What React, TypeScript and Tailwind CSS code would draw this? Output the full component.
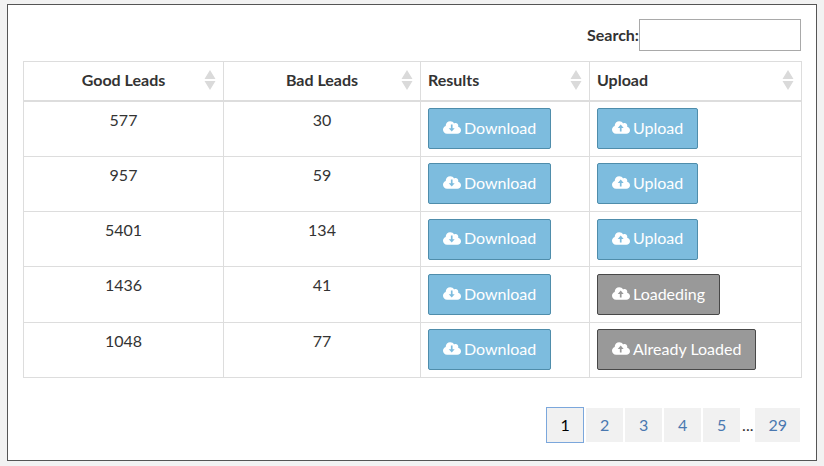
import React from 'react';

const CLOUD =
  'M537.6 226.6c4.1-10.7 6.4-22.4 6.4-34.6 0-53-43-96-96-96-19.7 0-38.1 6-53.3 16.2C367 64.2 315.3 32 256 32c-88.4 0-160 71.6-160 160 0 2.7.1 5.4.2 8.1C40.2 219.8 0 273.2 0 336c0 79.5 64.500 144 144 144h368c70.700 0 128-57.300 128-128 0-61.900-44-113.600-102.400-125.400z';
const UP_ARROW = 'M310 150 205 270h75v130h60V270h75z';
const DOWN_ARROW = 'M310 400 205 280h75V150h60v130h75z';

type Tone = 'blue' | 'gray';
type Direction = 'up' | 'down';

function CloudIcon({ direction, tone }: { direction: Direction; tone: Tone }) {
  return (
    <svg viewBox="0 32 640 448" className="h-[13px] w-[18px] shrink-0" aria-hidden="true">
      <path d={CLOUD} fill="currentColor" />
      <path
        d={direction === 'up' ? UP_ARROW : DOWN_ARROW}
        className={tone === 'blue' ? 'fill-[#7dbcde]' : 'fill-[#999999]'}
      />
    </svg>
  );
}

function SortIcon() {
  return (
    <svg viewBox="0 0 12 20" className="h-5 w-3 shrink-0" fill="#dadada" aria-hidden="true">
      <path d="M6 0 11.500 9H.5zM6 20 .5 11h11z" />
    </svg>
  );
}

function ActionButton({ label, direction, tone }: { label: string; direction: Direction; tone: Tone }) {
  const colors = tone === 'blue' ? 'border-[#4f8dab] bg-[#7dbcde]' : 'border-[#484848] bg-[#999999]';
  return (
    <button
      type="button"
      className={`flex h-[41px] items-center gap-[3px] rounded-xs border px-3.5 pb-0.5 whitespace-nowrap text-white ${colors}`}
    >
      <CloudIcon direction={direction} tone={tone} />
      {label}
    </button>
  );
}

const columns = [
  { label: 'Good Leads', centered: true, width: 'w-[200px]' },
  { label: 'Bad Leads', centered: true, width: 'w-[197px]' },
  { label: 'Results', centered: false, width: 'w-[169px]' },
  { label: 'Upload', centered: false, width: 'w-[212px]' },
];

const rows: { good: number; bad: number; upload: string; tone: Tone }[] = [
  { good: 577, bad: 30, upload: 'Upload', tone: 'blue' },
  { good: 957, bad: 59, upload: 'Upload', tone: 'blue' },
  { good: 5401, bad: 134, upload: 'Upload', tone: 'blue' },
  { good: 1436, bad: 41, upload: 'Loadeding', tone: 'gray' },
  { good: 1048, bad: 77, upload: 'Already Loaded', tone: 'gray' },
];

function PageButton({ page, current = false }: { page: number; current?: boolean }) {
  return (
    <button
      type="button"
      aria-current={current ? 'page' : undefined}
      className={
        current
          ? 'h-9 min-w-[38px] border border-[#7ba7dc] bg-[#f1f1f1] px-3 text-black'
          : 'h-[34px] min-w-[37px] bg-[#f1f1f1] px-[13px] text-[#4a78b0]'
      }
    >
      {page}
    </button>
  );
}

export default function App() {
  return (
    <div className="bg-[#f2f2f2] px-[7px] pt-1 pb-[5px] font-['Lato','Noto_Sans',sans-serif] text-base leading-6 text-[#333333]">
      <main className="border border-[#555555] bg-white px-[15px] pt-3.5 pb-[17px]">
        <div className="mb-2.5 flex items-center justify-end">
          <label htmlFor="search" className="font-bold">
            Search:
          </label>
          <input id="search" type="text" className="h-8 w-[162px] border border-[#a9a9a9] bg-white px-2" />
        </div>

        <table className="h-[317px] w-full table-fixed border-collapse border border-[#dddddd]">
          <thead>
            <tr className="h-[39px]">
              {columns.map((column) => (
                <th
                  key={column.label}
                  scope="col"
                  className={`border border-b-2 border-[#dddddd] px-[7px] pt-0 pb-0.5 font-bold ${column.width}`}
                >
                  <div className="flex items-center">
                    <span className={column.centered ? 'flex-1 pl-3 text-center' : 'flex-1 text-left'}>
                      {column.label}
                    </span>
                    <SortIcon />
                  </div>
                </th>
              ))}
            </tr>
          </thead>
          <tbody>
            {rows.map((row) => (
              <tr key={row.good}>
                <td className="border border-[#dddddd] px-[7px] pt-1.5 text-center align-top">{row.good}</td>
                <td className="border border-[#dddddd] px-[7px] pt-1.5 text-center align-top">{row.bad}</td>
                <td className="border border-[#dddddd] px-[7px] py-1.5">
                  <ActionButton label="Download" direction="down" tone="blue" />
                </td>
                <td className="border border-[#dddddd] px-[7px] py-1.5">
                  <ActionButton label={row.upload} direction="up" tone={row.tone} />
                </td>
              </tr>
            ))}
          </tbody>
        </table>

        <nav aria-label="Pagination" className="mt-[29px] flex items-center justify-end gap-0.5 pr-px">
          <PageButton page={1} current />
          <PageButton page={2} />
          <PageButton page={3} />
          <PageButton page={4} />
          <PageButton page={5} />
          <span>...</span>
          <PageButton page={29} />
        </nav>
      </main>
    </div>
  );
}
